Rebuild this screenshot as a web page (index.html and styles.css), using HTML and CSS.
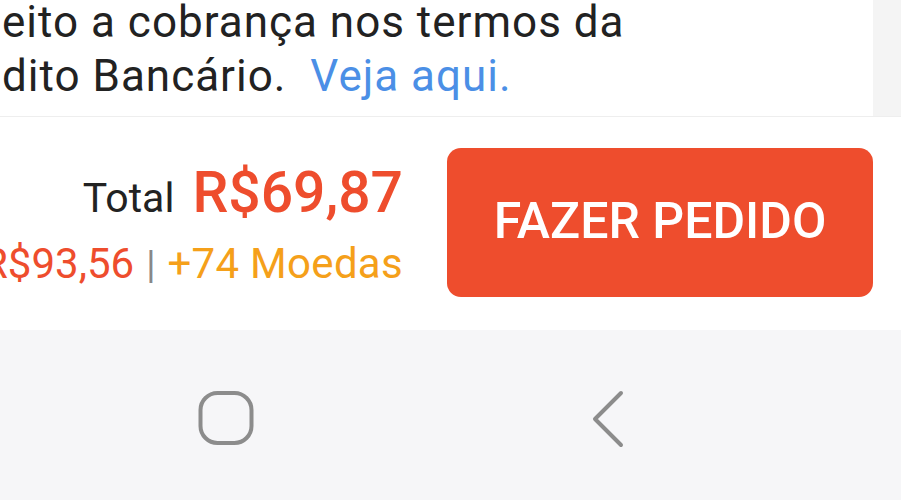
FILE: index.html
```html
<!DOCTYPE html>
<html lang="pt-BR">
<head>
<meta charset="UTF-8">
<meta name="viewport" content="width=device-width, initial-scale=1.0">
<title>Checkout</title>
<link rel="stylesheet" href="styles.css">
</head>
<body>
<div class="notice">
    <div class="notice-text">
        <p class="line">eito a cobrança nos termos da</p>
        <p class="line">dito Bancário. <a href="#" class="link">Veja aqui.</a></p>
    </div>
    <div class="notice-side"></div>
</div>

<div class="order-bar">
    <div class="price-box">
        <div class="total-row">
            <span class="total-label">Total</span>
            <span class="total-value">R$69,87</span>
        </div>
        <div class="saving-row">
            <span class="saving">R$93,56</span>
            <span class="sep">|</span>
            <span class="coins">+74 Moedas</span>
        </div>
    </div>
    <button class="order-btn">FAZER PEDIDO</button>
</div>

<div class="nav-bar">
    <svg class="nav-icon home" width="60" height="60" viewBox="0 0 60 60">
        <rect x="4.5" y="4" width="51" height="50" rx="17" fill="none" stroke="#8c8c8c" stroke-width="4"/>
    </svg>
    <svg class="nav-icon back" width="40" height="60" viewBox="0 0 40 60">
        <polyline points="31,4 5,30 31,56" fill="none" stroke="#8c8c8c" stroke-width="4" stroke-linecap="round" stroke-linejoin="round"/>
    </svg>
</div>
</body>
</html>
```

FILE: styles.css
```css
body {
    margin: 0;
    width: 901px;
    height: 500px;
    overflow: hidden;
    font-family: Roboto, "Liberation Sans", sans-serif;
    background-color: #fff;
}
.notice {
    display: flex;
    height: 116px;
    border-bottom: 1px solid #eeeeee;
}
.notice-text {
    flex: 1;
    padding-left: 2px;
    padding-top: 2px;
}
.line {
    margin: 0;
    font-size: 44px;
    letter-spacing: 1px;
    line-height: 54px;
    color: #222;
    white-space: nowrap;
}
.line:first-child {
    margin-top: -7px;
}
.link {
    color: #4b8fe6;
    text-decoration: none;
    margin-left: 12px;
}
.notice-side {
    width: 28px;
    background-color: #f4f4f4;
}
.order-bar {
    display: flex;
    height: 213px;
    box-sizing: border-box;
    padding-top: 31px;
}
.price-box {
    width: 403px;
    display: flex;
    flex-direction: column;
    align-items: flex-end;
    white-space: nowrap;
}
.total-row {
    display: flex;
    align-items: baseline;
    gap: 18px;
    margin-top: 11px;
    line-height: 68px;
}
.total-label {
    font-size: 41px;
    color: #222;
}
.total-value {
    font-size: 57px;
    font-weight: 500;
    color: #ee4d2d;
}
.saving-row {
    display: flex;
    align-items: baseline;
    gap: 12px;
    margin-top: 7px;
    font-size: 42px;
}
.saving {
    color: #ee4d2d;
}
.sep {
    color: #888;
    font-size: 38px;
}
.coins {
    color: #f5a01a;
    letter-spacing: 0.3px;
}
.order-btn {
    margin-left: 44px;
    width: 426px;
    height: 149px;
    border: none;
    border-radius: 14px;
    background-color: #ee4d2d;
    color: #fff;
    font-family: Roboto, "Liberation Sans", sans-serif;
    font-size: 50px;
    font-weight: 500;
    padding: 0;
    padding-bottom: 4px;
}
.nav-bar {
    height: 171px;
    background-color: #f6f6f8;
    display: flex;
    align-items: center;
    padding-left: 196px;
    padding-top: 6px;
    gap: 334px;
    box-sizing: border-box;
}
```
